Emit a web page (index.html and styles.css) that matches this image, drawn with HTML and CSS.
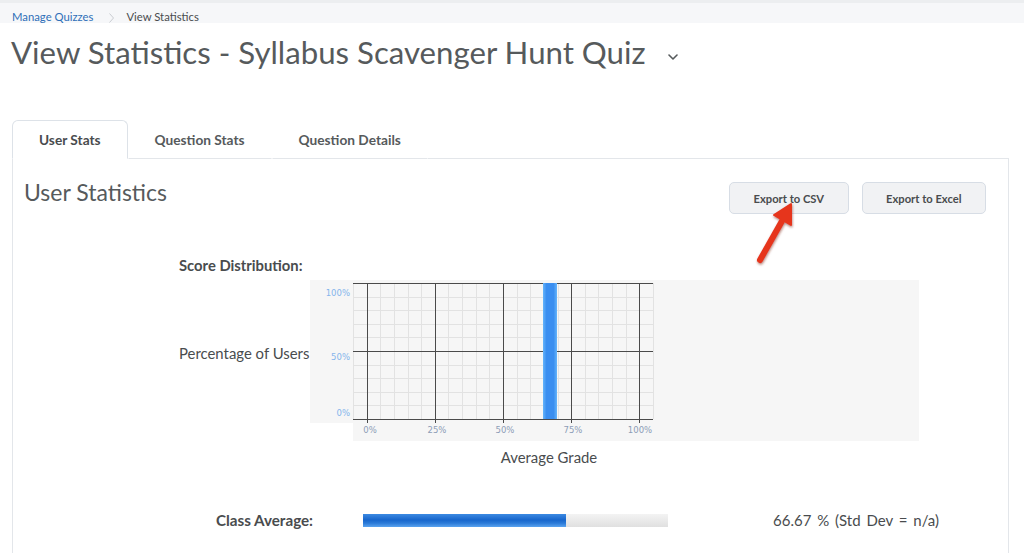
FILE: index.html
```html
<!DOCTYPE html>
<html lang="en">
<head>
<meta charset="utf-8">
<title>View Statistics</title>
<link rel="stylesheet" href="styles.css">
</head>
<body>
<header class="crumbs">
  <a class="crumb-link" href="#">Manage Quizzes</a>
  <svg class="crumb-sep" width="5" height="10" viewBox="0 0 5 10"><polyline points="0.5,0.5 4.5,5 0.5,9.5" fill="none" stroke="#c9cdd1" stroke-width="1"/></svg>
  <span class="crumb-current">View Statistics</span>
</header>

<main class="page">
  <h1 class="page-title">View Statistics - Syllabus Scavenger Hunt Quiz
    <svg class="title-caret" width="10" height="6" viewBox="0 0 10 6"><polyline points="1,1 5,5 9,1" fill="none" stroke="#565a5c" stroke-width="1.6" stroke-linecap="round" stroke-linejoin="round"/></svg>
  </h1>

  <nav class="tabs">
    <a class="tab active" href="#">User Stats</a>
    <a class="tab" href="#">Question Stats</a>
    <a class="tab" href="#">Question Details</a>
    <span class="tab-fill"></span>
  </nav>

  <section class="panel">
    <div class="panel-head">
      <h2 class="panel-title">User Statistics</h2>
      <div class="actions">
        <button class="btn">Export to CSV</button>
        <button class="btn">Export to Excel</button>
      </div>
    </div>

    <div class="dist">
      <div class="dist-title">Score Distribution:</div>
      <div class="dist-row">
        <div class="y-title">Percentage of Users</div>
        <svg class="chart" width="609" height="161" viewBox="0 0 609 161">
          <defs>
            <linearGradient id="barg" x1="0" x2="1" y1="0" y2="0">
              <stop offset="0" stop-color="#64b4fb"/>
              <stop offset="0.25" stop-color="#3a8ef0"/>
              <stop offset="0.75" stop-color="#3a8ef0"/>
              <stop offset="1" stop-color="#64b4fb"/>
            </linearGradient>
          </defs>
          <rect x="0" y="0" width="43" height="143" fill="#f6f6f6"/>
          <rect x="43" y="0" width="566" height="161" fill="#f6f6f6"/>
          <g stroke="#e2e2e2" stroke-width="1" id="minor"></g>
          <g id="major" stroke="#4a4a4a" stroke-width="1"></g>
          <rect x="233" y="3" width="14" height="136" fill="url(#barg)"/>
          <g class="ylab" font-family="DejaVu Sans, sans-serif" font-size="8.5" fill="#85b5ec" text-anchor="end">
            <text x="40" y="16">100%</text>
            <text x="40" y="80">50%</text>
            <text x="40" y="136">0%</text>
          </g>
          <g class="xlab" font-family="DejaVu Sans, sans-serif" font-size="8.5" fill="#8d9db6" text-anchor="middle">
            <text x="60" y="153">0%</text>
            <text x="127" y="153">25%</text>
            <text x="195" y="153">50%</text>
            <text x="263" y="153">75%</text>
            <text x="330" y="153">100%</text>
          </g>
        </svg>
      </div>
      <div class="x-title">Average Grade</div>
    </div>

    <div class="avg-row">
      <div class="avg-label">Class Average:</div>
      <div class="meter"><div class="meter-fill" style="width:66.67%"></div></div>
      <div class="avg-value">66.67 % (Std Dev = n/a)</div>
    </div>
  </section>
</main>

<svg class="callout" width="60" height="75" viewBox="745 198 60 75">
  <defs>
    <filter id="sh" x="-50%" y="-50%" width="200%" height="200%">
      <feDropShadow dx="0.5" dy="1.5" stdDeviation="1.2" flood-color="#7a1a10" flood-opacity="0.55"/>
    </filter>
  </defs>
  <g filter="url(#sh)">
    <line x1="760" y1="260" x2="782" y2="221" stroke="#e6351f" stroke-width="6" stroke-linecap="round"/>
    <polygon points="791,204 791,225 774,215" fill="#e6351f" stroke="#e6351f" stroke-width="2" stroke-linejoin="round"/>
  </g>
</svg>

<script src="chart.js"></script>
</body>
</html>
```

FILE: chart.js
```js
(function () {
  var ns = "http://www.w3.org/2000/svg";
  var minor = document.getElementById("minor");
  var major = document.getElementById("major");
  var x0 = 43, y0 = 3, cw = 300 / 22, ch = 13.6;
  function line(g, x1, y1, x2, y2) {
    var l = document.createElementNS(ns, "line");
    l.setAttribute("x1", x1); l.setAttribute("y1", y1);
    l.setAttribute("x2", x2); l.setAttribute("y2", y2);
    g.appendChild(l);
  }
  for (var i = 0; i <= 22; i++) {
    var x = Math.round(x0 + i * cw) + 0.5;
    line(minor, x, y0, x, y0 + 136);
  }
  for (var j = 0; j <= 10; j++) {
    var y = Math.round(y0 + j * ch) + 0.5;
    line(minor, x0, y, x0 + 300, y);
  }
  [1, 6, 11, 16, 21].forEach(function (k) {
    var x = Math.round(x0 + k * cw) + 0.5;
    line(major, x, y0, x, y0 + 140);
  });
  [0, 5, 10].forEach(function (k) {
    var y = Math.round(y0 + k * ch) + 0.5;
    line(major, x0, y, x0 + 300, y);
  });
})();
```

FILE: styles.css
```css
html, body {
  margin: 0;
  padding: 0;
}

body {
  font-family: Lato, "Open Sans", "Liberation Sans", sans-serif;
  color: #494c4e;
  background: #ffffff;
  position: relative;
}

.crumbs {
  box-sizing: border-box;
  height: 23px;
  border-top: 3px solid #eceef0;
  background: #f6f7f9;
  padding: 7px 0 0 12px;
  display: flex;
  align-items: flex-start;
  font-size: 11.3px;
  line-height: 14px;
}

.crumb-link {
  color: #2f6fb8;
  text-decoration: none;
}

.crumb-sep {
  margin: 3px 12px 0 16px;
}

.crumb-current {
  color: #494c4e;
}

.page {
  padding: 0 15px 0 12px;
}

.page-title {
  margin: 11px 0 0 -1px;
  font-size: 31.2px;
  line-height: 36px;
  font-weight: 400;
  color: #565a5c;
  display: flex;
  align-items: center;
}

.title-caret {
  margin: 10px 0 0 22px;
}

.tabs {
  display: flex;
  margin-top: 50px;
  height: 39px;
}

.tab {
  box-sizing: border-box;
  height: 39px;
  padding: 0 26px;
  line-height: 38px;
  font-size: 13.7px;
  font-weight: 700;
  color: #565a5c;
  text-decoration: none;
  border: 1px solid transparent;
  border-bottom: 1px solid #e3e6ea;
  border-radius: 6px 6px 0 0;
}

.tab.active {
  color: #494c4e;
  border-color: #dde2e8;
  border-bottom-color: #ffffff;
  background: #ffffff;
}

.tab-fill {
  flex: 1;
  border-bottom: 1px solid #e3e6ea;
}

.panel {
  border-left: 1px solid #e3e6ea;
  border-right: 1px solid #e3e6ea;
  padding: 21px 22px 30px 11px;
}

.panel-head {
  display: flex;
  align-items: flex-start;
  justify-content: space-between;
}

.panel-title {
  margin: 0;
  font-size: 23px;
  line-height: 24px;
  font-weight: 400;
  color: #565a5c;
}

.actions {
  display: flex;
  gap: 13px;
  margin-top: 2px;
}

.btn {
  box-sizing: border-box;
  height: 32px;
  padding: 0 23.5px;
  font-family: Lato, "Open Sans", sans-serif;
  font-size: 11.2px;
  font-weight: 700;
  color: #494c4e;
  background: #f1f2f4;
  border: 1px solid #d7dde5;
  border-radius: 5px;
}

.dist {
  width: 740px;
  margin: 42px 0 0 155px;
}

.dist-title {
  font-size: 14.8px;
  line-height: 18px;
  font-weight: 700;
  color: #494c4e;
}

.dist-row {
  display: flex;
  margin-top: 6px;
}

.y-title {
  width: 131px;
  margin-top: 64px;
  font-size: 14.9px;
  line-height: 18px;
  white-space: nowrap;
}

.chart {
  display: block;
}

.x-title {
  margin-top: 7px;
  text-align: center;
  font-size: 14.9px;
  line-height: 18px;
}

.avg-row {
  display: flex;
  align-items: center;
  margin: 45px 0 0 192px;
  height: 18px;
}

.avg-label {
  width: 147px;
  font-size: 15.2px;
  font-weight: 700;
  line-height: 18px;
}

.meter {
  width: 305px;
  height: 13px;
  background: linear-gradient(#f3f3f3, #e0e0e0);
}

.meter-fill {
  height: 100%;
  background: linear-gradient(#3d8ae2, #1766cc 45%, #2a7ad8 70%, #5aa3ef);
}

.avg-value {
  margin-left: 105px;
  font-size: 15px;
  line-height: 18px;
  word-spacing: 2px;
}

.callout {
  position: absolute;
  left: 745px;
  top: 198px;
}
```
